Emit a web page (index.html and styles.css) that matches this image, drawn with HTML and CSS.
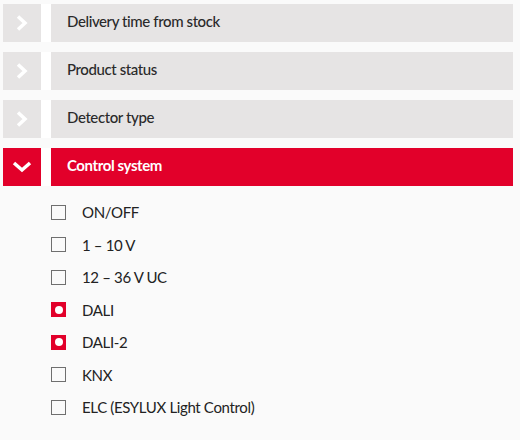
FILE: index.html
```html
<!DOCTYPE html>
<html lang="en">
<head>
  <meta charset="UTF-8" />
  <meta name="viewport" content="width=device-width, initial-scale=1" />
  <title>Filter</title>
  <link rel="stylesheet" href="styles.css">
</head>
<body>

<div class="filters">
  <div class="filter">
    <div class="filter-head">
      <span class="toggle">
        <svg width="14" height="16" viewBox="0 0 14 16"><path d="M3 1.5 L10 8 L3 14.5" fill="none" stroke="#fff" stroke-width="3.5"/></svg>
      </span>
      <span class="label">Delivery time from stock</span>
    </div>
  </div>

  <div class="filter">
    <div class="filter-head">
      <span class="toggle">
        <svg width="14" height="16" viewBox="0 0 14 16"><path d="M3 1.5 L10 8 L3 14.5" fill="none" stroke="#fff" stroke-width="3.5"/></svg>
      </span>
      <span class="label">Product status</span>
    </div>
  </div>

  <div class="filter">
    <div class="filter-head">
      <span class="toggle">
        <svg width="14" height="16" viewBox="0 0 14 16"><path d="M3 1.5 L10 8 L3 14.5" fill="none" stroke="#fff" stroke-width="3.5"/></svg>
      </span>
      <span class="label">Detector type</span>
    </div>
  </div>

  <div class="filter open">
    <div class="filter-head">
      <span class="toggle">
        <svg width="20" height="14" viewBox="0 0 20 14"><path d="M2 3 L10 10 L18 3" fill="none" stroke="#fff" stroke-width="3.5"/></svg>
      </span>
      <span class="label">Control system</span>
    </div>
    <ul class="options">
      <li><span class="box"></span>ON/OFF</li>
      <li><span class="box"></span>1 – 10 V</li>
      <li><span class="box"></span>12 – 36 V UC</li>
      <li><span class="box checked"></span>DALI</li>
      <li><span class="box checked"></span>DALI-2</li>
      <li><span class="box"></span>KNX</li>
      <li><span class="box"></span>ELC (ESYLUX Light Control)</li>
    </ul>
  </div>
</div>

</body>
</html>
```

FILE: styles.css
```css
body {
  margin: 0;
  background-color: #fafafa;
  font-family: Lato, "Open Sans", sans-serif;
  color: #222;
}
.filters {
  padding: 4px 7px 0 3px;
}
.filter {
  margin-bottom: 10px;
}
.filter-head {
  display: flex;
  height: 38px;
  background-color: #fff;
}
.toggle {
  width: 38px;
  display: flex;
  align-items: center;
  justify-content: center;
  background-color: #e6e4e4;
  margin-right: 10px;
}
.label {
  flex: 1;
  display: flex;
  align-items: center;
  padding: 0 0 4px 16px;
  background-color: #e6e4e4;
  font-size: 15px;
  font-weight: 500;
  letter-spacing: -0.4px;
  color: #2a2a2a;
}
.open .toggle,
.open .label {
  background-color: #e2002a;
  color: #fff;
}
.open .label {
  font-weight: 700;
}
.options {
  list-style: none;
  margin: 10px 0 0;
  padding: 0 0 0 48px;
}
.options li {
  display: flex;
  align-items: center;
  height: 32.5px;
  font-size: 15px;
  letter-spacing: -0.35px;
}
.box {
  box-sizing: border-box;
  width: 15px;
  height: 15px;
  border: 1.5px solid #6f6f6f;
  margin-right: 16px;
  display: flex;
  align-items: center;
  justify-content: center;
}
.box.checked {
  border: none;
  background-color: #e2002a;
}
.box.checked::after {
  content: "";
  width: 8px;
  height: 8px;
  border-radius: 50%;
  background-color: #fff;
}
```
